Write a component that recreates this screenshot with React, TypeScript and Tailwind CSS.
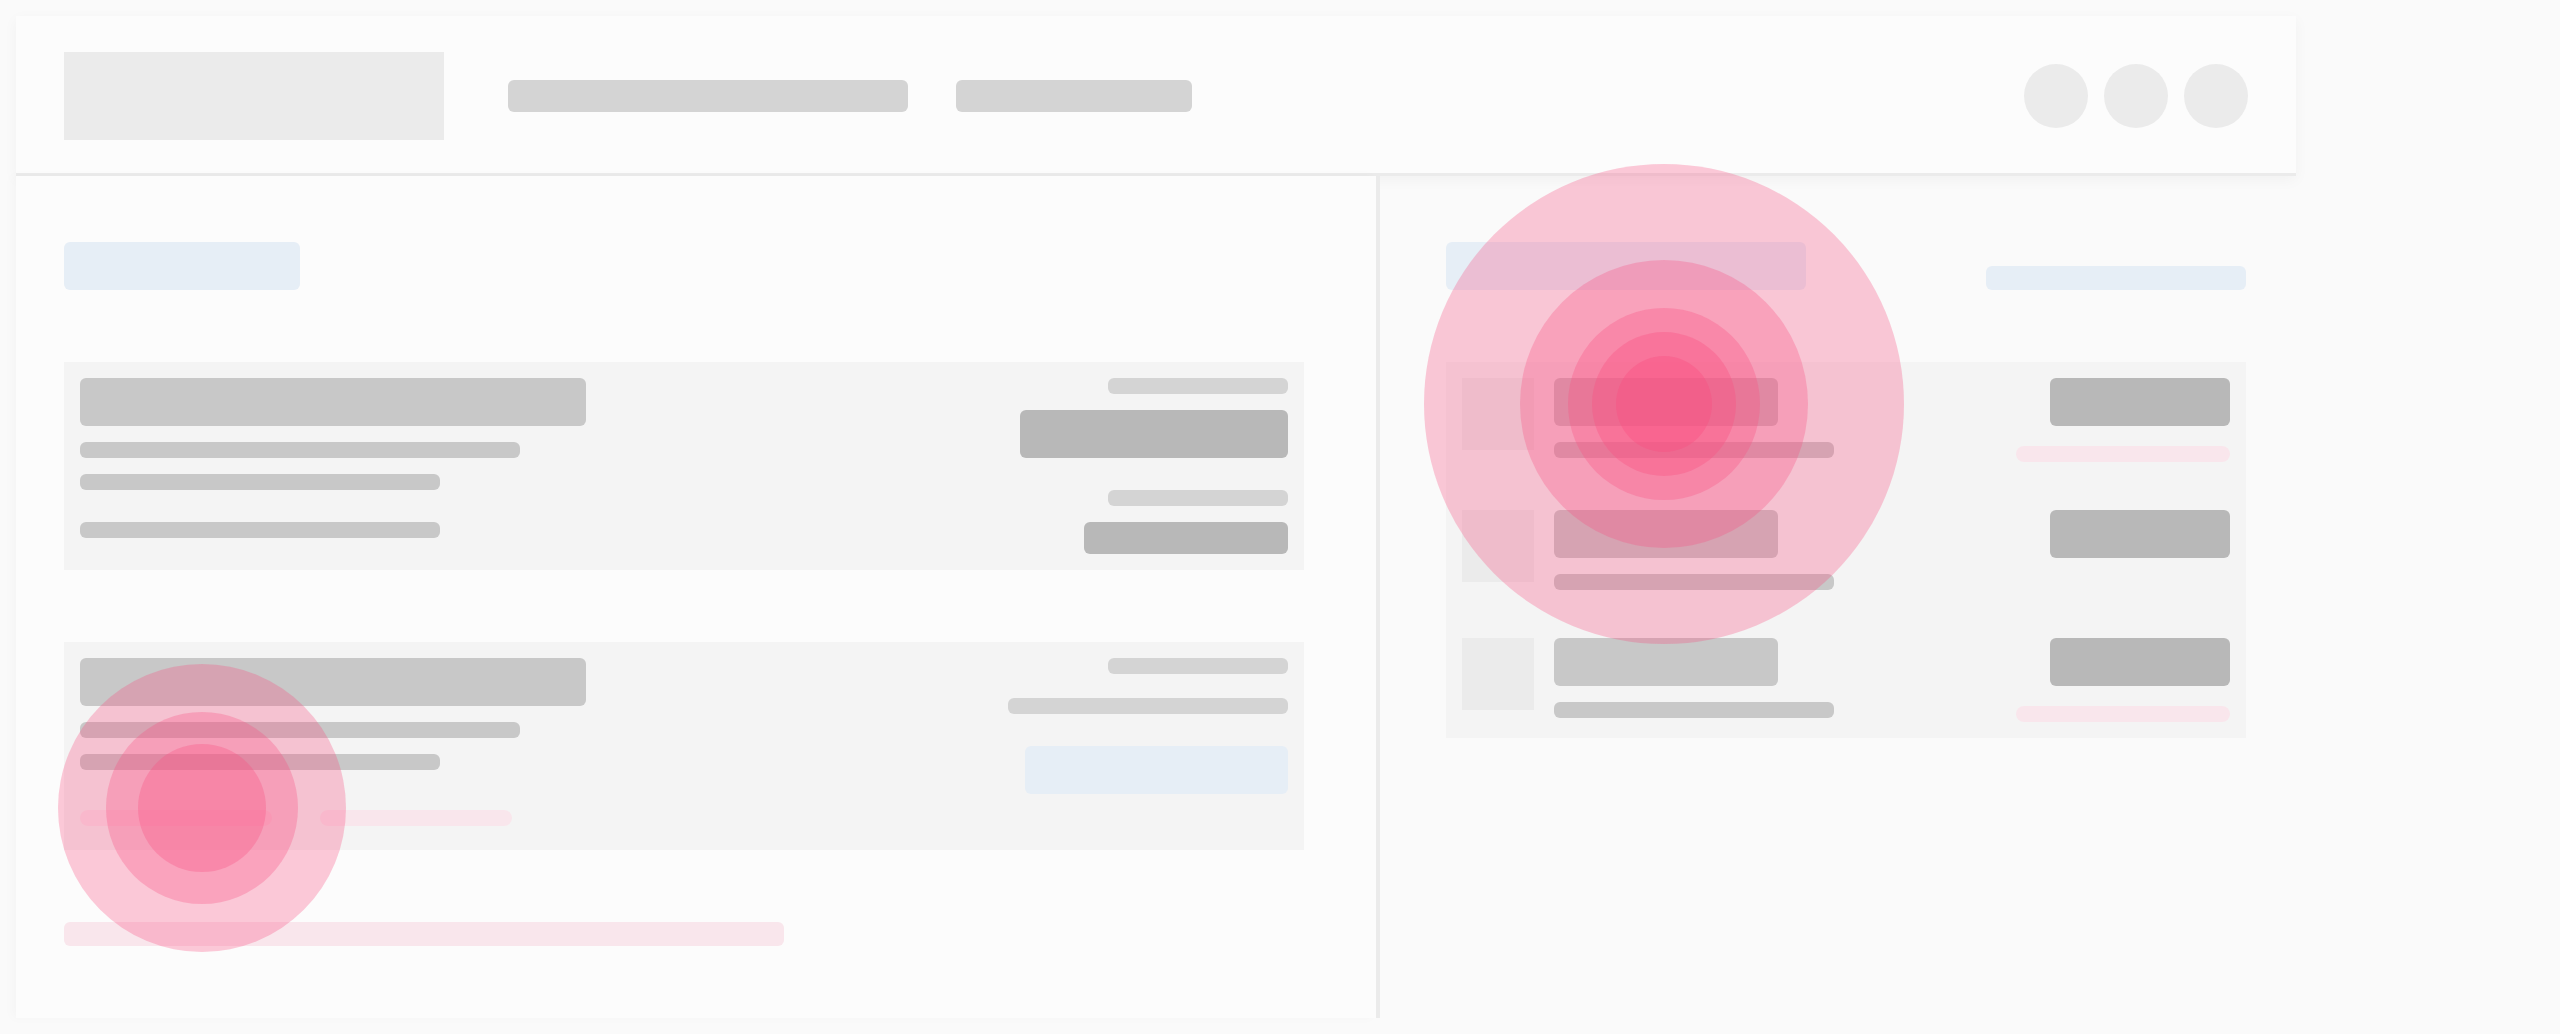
import React from 'react'

type Spot = { cx: number; cy: number; r: number; a: number }

// heat spots laid over the page (page coordinates)
const spots: Spot[] = [
    { cx: 202, cy: 808, r: 144, a: 0.3 },
    { cx: 202, cy: 808, r: 96, a: 0.3 },
    { cx: 202, cy: 808, r: 64, a: 0.32 },
    { cx: 1664, cy: 404, r: 240, a: 0.3 },
    { cx: 1664, cy: 404, r: 144, a: 0.3 },
    { cx: 1664, cy: 404, r: 96, a: 0.32 },
    { cx: 1664, cy: 404, r: 72, a: 0.35 },
    { cx: 1664, cy: 404, r: 48, a: 0.38 },
]

const Bar: React.FC<{ className: string }> = ({ className }) => (
    <div className={`rounded-[6px] ${className}`} />
)

const HeaderBar = () => (
    <header className="flex h-[160px] w-full items-center bg-[#fcfcfc] px-12 shadow-[inset_0_-3px_0_#ebebeb,0_4px_14px_rgba(0,0,0,0.04)]">
        <div className="h-[88px] w-[380px] bg-[#ebebeb]" />
        <Bar className="ml-16 h-8 w-[400px] bg-[#d4d4d4]" />
        <Bar className="ml-12 h-8 w-[236px] bg-[#d4d4d4]" />
        <div className="ml-auto flex gap-4">
            <div className="h-16 w-16 rounded-full bg-[#ebebeb]" />
            <div className="h-16 w-16 rounded-full bg-[#ebebeb]" />
            <div className="h-16 w-16 rounded-full bg-[#ebebeb]" />
        </div>
    </header>
)

const LeftPanel = () => (
    <section className="flex h-full w-[1360px] flex-col bg-[#fcfcfc] pl-12 pt-[66px] shadow-[-4px_0_10px_rgba(0,0,0,0.025)]">
        <Bar className="h-12 w-[236px] bg-[#e6eef6]" />

        {/* first card */}
        <div className="mt-[72px] flex h-[208px] w-[1240px] justify-between bg-[#f4f4f4] p-4">
            <div className="flex flex-col">
                <Bar className="h-12 w-[506px] bg-[#c8c8c8]" />
                <Bar className="mt-4 h-4 w-[440px] bg-[#c8c8c8]" />
                <Bar className="mt-4 h-4 w-[360px] bg-[#c8c8c8]" />
                <Bar className="mt-8 h-4 w-[360px] bg-[#c8c8c8]" />
            </div>
            <div className="flex flex-col items-end">
                <Bar className="h-4 w-[180px] bg-[#d4d4d4]" />
                <Bar className="mt-4 h-12 w-[268px] bg-[#b8b8b8]" />
                <Bar className="mt-8 h-4 w-[180px] bg-[#d4d4d4]" />
                <Bar className="mt-4 h-8 w-[204px] bg-[#b8b8b8]" />
            </div>
        </div>

        {/* second card */}
        <div className="mt-[72px] flex h-[208px] w-[1240px] justify-between bg-[#f4f4f4] p-4">
            <div className="flex flex-col">
                <Bar className="h-12 w-[506px] bg-[#c8c8c8]" />
                <Bar className="mt-4 h-4 w-[440px] bg-[#c8c8c8]" />
                <Bar className="mt-4 h-4 w-[360px] bg-[#c8c8c8]" />
                <div className="mt-10 flex gap-12">
                    <div className="h-4 w-[192px] rounded-full bg-[#f9e6ec]" />
                    <div className="h-4 w-[192px] rounded-full bg-[#f9e6ec]" />
                </div>
            </div>
            <div className="flex flex-col items-end">
                <Bar className="h-4 w-[180px] bg-[#d4d4d4]" />
                <Bar className="mt-6 h-4 w-[280px] bg-[#d4d4d4]" />
                <Bar className="mt-8 h-12 w-[263px] bg-[#e6eef6]" />
            </div>
        </div>

        <div className="mt-[72px] h-6 w-[720px] rounded-[6px] bg-[#f9e6ec]" />
    </section>
)

const ListRow: React.FC<{ tag?: boolean }> = ({ tag }) => (
    <div className="flex items-start">
        <div className="h-[72px] w-[72px] bg-[#ebebeb]" />
        <div className="ml-5 flex flex-col">
            <Bar className="h-12 w-[224px] bg-[#c8c8c8]" />
            <Bar className="mt-4 h-4 w-[280px] bg-[#c8c8c8]" />
        </div>
        <div className="ml-auto flex flex-col items-end">
            <Bar className="h-12 w-[180px] bg-[#b8b8b8]" />
            {tag && <div className="mt-5 h-4 w-[214px] rounded-full bg-[#f9e6ec]" />}
        </div>
    </div>
)

const RightPanel = () => (
    <section className="flex w-[916px] flex-col pl-[66px] pt-[66px]">
        <div className="flex w-[800px] items-end justify-between">
            <Bar className="h-12 w-[360px] bg-[#e6eef6]" />
            <Bar className="h-6 w-[260px] bg-[#e6eef6]" />
        </div>
        <div className="mt-[72px] flex w-[800px] flex-col gap-12 bg-[#f4f4f4] p-4">
            <ListRow tag />
            <ListRow />
            <ListRow tag />
        </div>
    </section>
)

export default function App() {
    return (
        <div className="relative h-[1034px] w-[2560px] overflow-hidden bg-[#fafafa] p-4">
            <div className="flex w-[2280px] flex-col">
                <HeaderBar />
                <div className="flex h-[842px]">
                    <LeftPanel />
                    <div className="h-full w-1 bg-[#ebebeb]" />
                    <RightPanel />
                </div>
            </div>

            {spots.map((s, i) => (
                <div
                    key={i}
                    className="pointer-events-none absolute rounded-full"
                    style={{
                        left: s.cx - s.r,
                        top: s.cy - s.r,
                        width: s.r * 2,
                        height: s.r * 2,
                        backgroundColor: `rgba(250, 80, 130, ${s.a})`,
                    }}
                />
            ))}
        </div>
    )
}
